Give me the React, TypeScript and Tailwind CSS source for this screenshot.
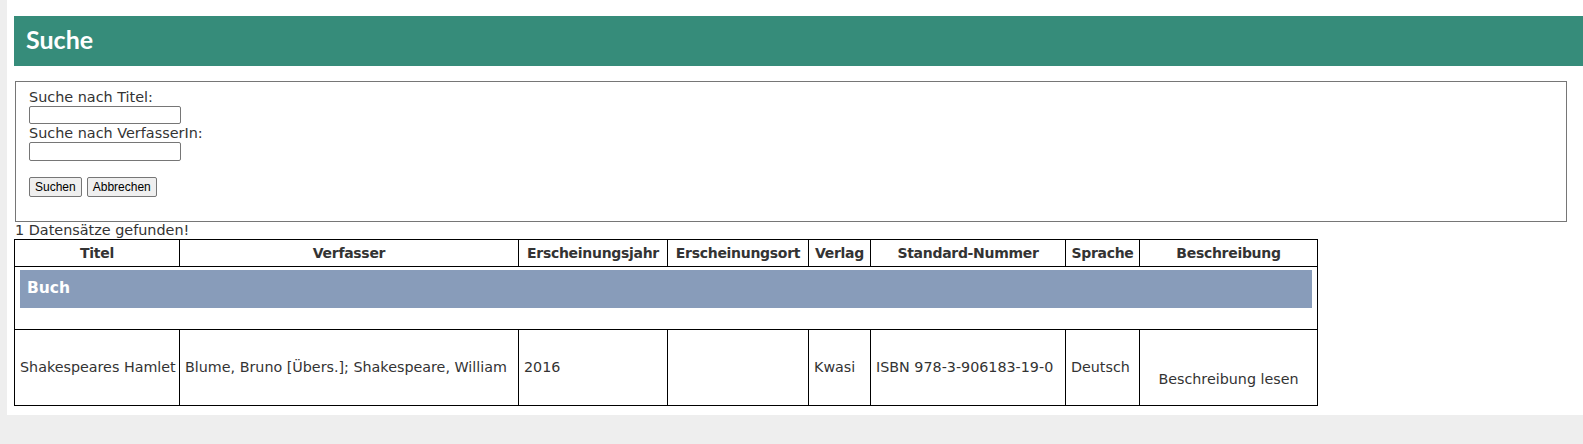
export default function App() {
  const cols = [165, 339, 149, 141, 62, 195, 74, 178];
  const heads = [
    'Titel',
    'Verfasser',
    'Erscheinungsjahr',
    'Erscheinungsort',
    'Verlag',
    'Standard-Nummer',
    'Sprache',
    'Beschreibung',
  ];

  return (
    <div className="min-h-screen bg-[#eeeeee] pl-[7px] font-['DejaVu_Sans',Verdana,sans-serif] text-[#333333]">
      <div className="bg-white pt-4 pl-[7px] pb-[9px]">
        {/* Kopfzeile */}
        <div className="h-[50px] bg-[#368c7a] flex items-center pl-3 pb-[2px] text-white font-['Lato',sans-serif] font-bold text-[25px]">
          Suche
        </div>

        {/* Suchformular */}
        <fieldset className="mt-[15px] ml-px mr-[16px] h-[141px] border border-[#767676] pl-[13px] pt-[6px] text-[14.4px] leading-[18px]">
          <label className="block">Suche nach Titel:</label>
          <input className="block w-[152px] h-[18px] border border-[#767676] rounded-[2px] bg-white" />
          <label className="block">Suche nach VerfasserIn:</label>
          <input className="block w-[152px] h-[19px] border border-[#767676] rounded-[2px] bg-white" />
          <div className="flex gap-[5px] mt-[16px] font-['Liberation_Sans',Arial,sans-serif] text-[12px] leading-[14px] text-black">
            <button className="h-[20px] px-[5px] border border-[#767676] rounded-[2px] bg-[#efefef]">Suchen</button>
            <button className="h-[20px] px-[5px] border border-[#767676] rounded-[2px] bg-[#efefef]">Abbrechen</button>
          </div>
        </fieldset>

        <div className="text-[14.4px] leading-[17px] pl-px">1 Datensätze gefunden!</div>

        {/* Ergebnistabelle */}
        <table className="table-fixed border-collapse w-[1304px] text-[14.3px]">
          <colgroup>
            {cols.map((w, i) => (
              <col key={i} style={{ width: w }} />
            ))}
          </colgroup>
          <thead>
            <tr className="h-[27px]">
              {heads.map((h) => (
                <th key={h} className="border border-black font-bold text-center px-[3px] whitespace-nowrap text-[14px] tracking-[-0.3px]">
                  {h}
                </th>
              ))}
            </tr>
          </thead>
          <tbody>
            <tr className="h-[63px]">
              <td colSpan={8} className="border border-black align-top pt-[3px] px-[5px]">
                <div className="h-[38px] bg-[#889cba] flex items-center pl-[7px] text-white font-bold text-[15.5px]">
                  Buch
                </div>
              </td>
            </tr>
            <tr className="h-[76px]">
              <td className="border border-black px-[5px] whitespace-nowrap">Shakespeares Hamlet</td>
              <td className="border border-black px-[5px] whitespace-nowrap">Blume, Bruno [Übers.]; Shakespeare, William</td>
              <td className="border border-black px-[5px]">2016</td>
              <td className="border border-black px-[5px]"></td>
              <td className="border border-black px-[5px]">Kwasi</td>
              <td className="border border-black px-[5px] whitespace-nowrap">ISBN 978-3-906183-19-0</td>
              <td className="border border-black px-[5px]">Deutsch</td>
              <td className="border border-black px-[5px] text-center pt-[24px]">Beschreibung lesen</td>
            </tr>
          </tbody>
        </table>
      </div>
    </div>
  );
}
